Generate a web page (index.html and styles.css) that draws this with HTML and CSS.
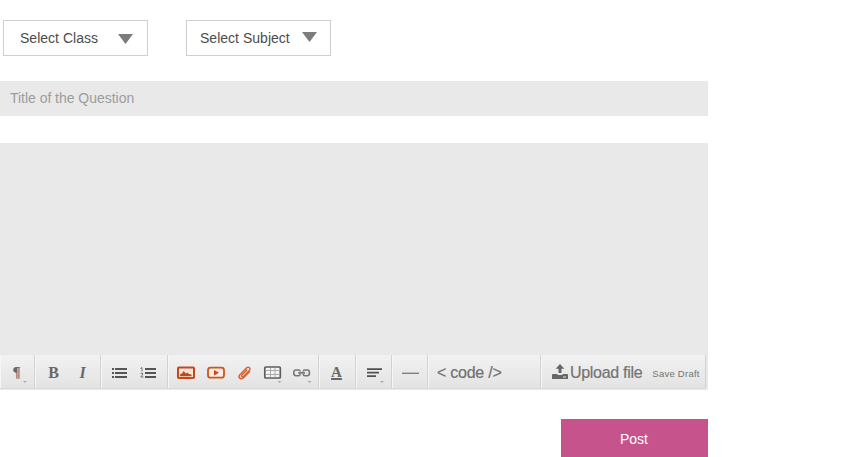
FILE: index.html
```html
<!DOCTYPE html>
<html lang="en">
<head>
<meta charset="utf-8">
<title>Ask a Question</title>
<link rel="stylesheet" href="styles.css">
</head>
<body>
<main class="form">
  <div class="selects">
    <div class="select select-class"><span class="select-label">Select Class</span><span class="arrow"></span></div>
    <div class="select select-subject"><span class="select-label">Select Subject</span><span class="arrow"></span></div>
  </div>
  <div class="title-field">Title of the Question</div>
  <section class="editor">
    <div class="editor-body"></div>
    <div class="toolbar">
      <div class="group g-par">
        <span class="tool letter par">¶</span>
        <i class="more"></i>
      </div>
      <div class="group g-style">
        <span class="tool letter">B</span>
        <span class="tool letter italic">I</span>
      </div>
      <div class="group g-list">
        <svg class="tool" viewBox="0 0 29 33" fill="#555"><path d="M7 13h2v2H7zM7 17h2v2H7zM7 21h2v2H7zM10 13h12v2H10zM10 17h12v2H10zM10 21h12v2H10z"/></svg>
        <svg class="tool" viewBox="0 0 29 33" fill="#555"><path d="M11 13h11v2H11zM11 17h11v2H11zM11 21h11v2H11z"/><path d="M6.500 13.500L8 12.500V16.500M6.500 18.500Q9 17.500 9 19L6.800 22H9.500" fill="none" stroke="#666" stroke-width=".9"/></svg>
      </div>
      <div class="group g-media">
        <svg class="tool" viewBox="0 0 29 33"><rect x="6" y="12.500" width="16" height="10.500" rx=".8" fill="#f3e4dc" stroke="#c34a18" stroke-width="2"/><path d="M8 21.300V19.500l2-1 1.500-2.500 2.500 2.500 1.500-1 1.500 1.500 2.500.5v1.800z" fill="#c34a18"/></svg>
        <svg class="tool" viewBox="0 0 29 33"><rect x="7" y="12.700" width="16" height="10" rx="2.500" fill="#f5ece7" stroke="#ce561c" stroke-width="1.800"/><path d="M13 15l5 2.700-5 2.700z" fill="#c34a18"/></svg>
        <svg class="tool" viewBox="0 0 29 33"><path d="M16.800 15l-5 5c-1 1.200.6 2.500 1.700 1.400l5.800-5.800c2-2.200-.8-4.600-2.900-2.600l-6.500 6.600c-2.400 2.800.9 5.600 3.600 3.200l6-6" fill="none" stroke="#d8602a" stroke-width="1.400" stroke-linecap="round"/></svg>
        <svg class="tool" viewBox="0 0 29 33"><rect x="5.800" y="12" width="15.500" height="11" rx="1" fill="#f4f4f4" stroke="#5c5c5c" stroke-width="1.700"/><path d="M7 15.500h13.500M7 19.500h13.500M11.500 13v9.500M16 13v9.500" stroke="#aaa" stroke-width="1"/><path d="M18.500 26h4l-2 2z" fill="#aaa"/></svg>
        <svg class="tool" viewBox="0 0 29 33"><path d="M12.200 16.500Q12 15 10.500 15H8q-2.200 0-2.200 2.200v1.300q0 2.200 2.200 2.200h2.500q1.500 0 1.700-1.500M15.100 16.500q.2-1.500 1.700-1.500h2.400q2.200 0 2.200 2.200v1.300q0 2.200-2.200 2.200h-2.400q-1.500 0-1.700-1.500M10.200 17.900h6.900" fill="none" stroke="#777" stroke-width="1.600"/><path d="M19.500 26h4l-2 2z" fill="#aaa"/></svg>
      </div>
      <div class="group g-color">
        <span class="tool letter underlined">A</span>
      </div>
      <div class="group g-align">
        <svg class="tool" viewBox="0 0 29 33" fill="#505050"><path d="M7 13.200h15v1.900H7zM7 16.700h12v1.900H7zM7 20.200h9v1.900H7z"/><path d="M20 26h4l-2 2z" fill="#aaa"/></svg>
      </div>
      <div class="group g-rule">
        <svg class="tool" viewBox="0 0 29 33"><path d="M6 18.300h17" stroke="#808080" stroke-width="1.400"/></svg>
      </div>
      <div class="group g-code">&lt; code /&gt;</div>
      <div class="group g-upload">
        <svg class="upload-icon" viewBox="0 0 17 16" fill="#666"><path d="M8 0l4.300 4.800H9.500V9h-3V4.800H3.700z"/><path fill-rule="evenodd" d="M1 10h4.500v1h5v-1H15q1 0 1 1v4H0v-4q0-1 1-1zM11 12.500v1h3v-1z"/></svg>
        <span class="upload">Upload file</span>
        <span class="draft">Save Draft</span>
      </div>
    </div>
  </section>
  <button class="post" type="button">Post</button>
</main>
</body>
</html>
```
FILE: styles.css
```css
* { box-sizing: border-box; }
body {
  margin: 0;
  height: 457px;
  overflow: hidden;
  background: #fff;
  font-family: "Liberation Sans", Arial, sans-serif;
}
.form {
  width: 708px;
  padding-top: 20px;
  display: flex;
  flex-direction: column;
}
.selects { display: flex; gap: 38px; padding-left: 3px; }
.select {
  display: flex;
  align-items: center;
  justify-content: space-between;
  width: 145px;
  height: 36px;
  border: 1px solid #cfcfcf;
  color: #4c4c4c;
  font-size: 14px;
}
.select-class { padding: 0 14px 0 16px; }
.select-subject { padding: 0 13px; }
.select-label { letter-spacing: .02px; white-space: nowrap; }
.arrow {
  width: 15px;
  height: 10px;
  margin-top: 2px;
  background: #7c7c7c;
  clip-path: polygon(0 0, 100% 0, 50% 100%);
}
.select-subject .arrow { margin-top: -2px; }
.title-field {
  height: 35px;
  margin-top: 25px;
  padding-left: 10px;
  background: #e9e9e9;
  color: #9c9c9c;
  font-size: 14px;
  line-height: 35px;
  letter-spacing: -.03px;
}
.editor { height: 247px; margin-top: 27px; background: #e9e9e9; }
.editor-body { height: 212px; }
.toolbar {
  display: grid;
  grid-template-columns: 35px 66px 67px 151px 37px 36px 36px 113px 165px;
  width: 706px;
  height: 34px;
  background: linear-gradient(#f2f2f2, #e3e3e3);
  border-bottom: 1px solid #dadada;
}
.group {
  position: relative;
  display: flex;
  align-items: center;
  border-right: 1px solid #d2d2d2;
  border-left: 1px solid #f6f6f6;
}
.tool { width: 29px; height: 33px; flex: none; }
.letter {
  color: #686868;
  font: bold 16px/35px "Liberation Serif", serif;
  text-align: center;
}
.italic { font-style: italic; }
.par { font-size: 15px; }
.more {
  position: absolute;
  left: 22px;
  top: 26px;
  border: 2px solid transparent;
  border-top-color: #aaa;
  border-bottom: 0;
}
.underlined { font-size: 15px; text-decoration: underline; text-decoration-thickness: 2px; text-underline-offset: 1px; }
.g-par { padding-left: 1px; }
.g-style { padding-left: 3px; }
.g-list { padding-left: 3px; }
.g-media { padding-left: 3px; }
.g-color { padding-left: 2px; }
.g-align { padding-left: 3px; }
.g-rule { padding-left: 3px; }
.g-code {
  padding: 2px 0 0 8px;
  color: #717171;
  font-size: 16px;
  letter-spacing: -.25px;
  -webkit-text-stroke: .2px;
  white-space: nowrap;
}
.g-upload { padding-left: 10px; color: #747474; white-space: nowrap; }
.upload-icon { width: 17px; height: 16px; margin-top: 1px; }
.upload { margin: 2px 0 0 1px; font-size: 16px; letter-spacing: -.3px; -webkit-text-stroke: .2px; }
.draft { margin: 4px 0 0 10px; font-size: 9.500px; letter-spacing: .25px; }
.post {
  align-self: flex-end;
  width: 147px;
  height: 39px;
  margin-top: 29px;
  padding: 0 1px 0 0;
  border: 0;
  background: #c6538c;
  color: #fff;
  font: 14px "Liberation Sans", Arial, sans-serif;
}
```
